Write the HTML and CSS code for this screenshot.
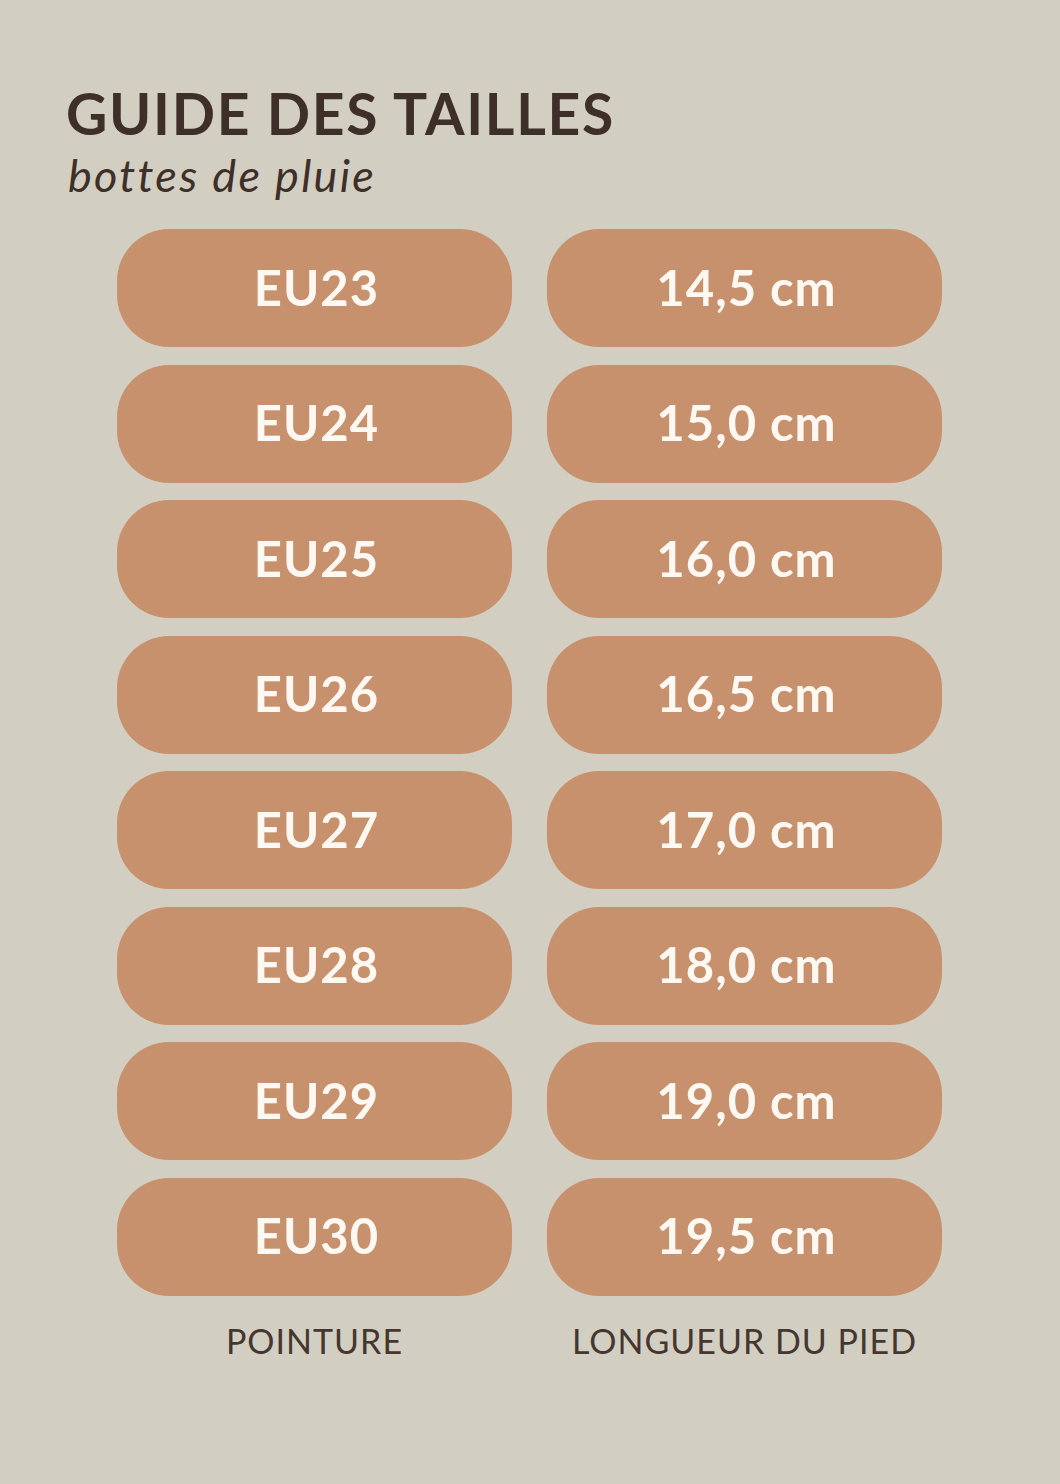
FILE: index.html
```html
<!DOCTYPE html>
<html lang="fr">
<head>
<meta charset="utf-8">
<title>Guide des tailles</title>
<link rel="stylesheet" href="styles.css">
</head>
<body>
<main class="page">
  <header class="head">
    <h1 class="title">GUIDE DES TAILLES</h1>
    <p class="subtitle">bottes de pluie</p>
  </header>
  <section class="grid">
    <div class="pill">EU23</div><div class="pill">14,5 cm</div>
    <div class="pill">EU24</div><div class="pill">15,0 cm</div>
    <div class="pill">EU25</div><div class="pill">16,0 cm</div>
    <div class="pill">EU26</div><div class="pill">16,5 cm</div>
    <div class="pill">EU27</div><div class="pill">17,0 cm</div>
    <div class="pill">EU28</div><div class="pill">18,0 cm</div>
    <div class="pill">EU29</div><div class="pill">19,0 cm</div>
    <div class="pill">EU30</div><div class="pill">19,5 cm</div>
    <div class="label">POINTURE</div><div class="label">LONGUEUR DU PIED</div>
  </section>
</main>
</body>
</html>
```
FILE: styles.css
```css
html, body {
  margin: 0;
  padding: 0;
  background: #d2cfc2;
}
.page {
  width: 1060px;
  height: 1484px;
  box-sizing: border-box;
  padding: 81px 0 0 0;
  font-family: Lato, "Open Sans", sans-serif;
}
.head {
  padding-left: 66px;
}
.title {
  margin: 0;
  font-size: 57px;
  font-weight: 700;
  line-height: 64px;
  color: #3e2f29;
  letter-spacing: 1.7px;
}
.subtitle {
  margin: 3px 0 0 0;
  font-size: 45px;
  font-style: italic;
  font-weight: 400;
  line-height: 54px;
  color: #3e2f29;
  padding-left: 2px;
  letter-spacing: 2.3px;
}
.grid {
  margin: 27px 0 0 117px;
  display: grid;
  grid-template-columns: 395px 395px;
  column-gap: 35px;
  row-gap: 17.5px;
}
.pill {
  height: 118px;
  border-radius: 52px;
  background: #c8916e;
  color: #fdf8f2;
  font-size: 49px;
  font-weight: 700;
  letter-spacing: 1px;
  display: flex;
  align-items: center;
  justify-content: center;
  padding: 0 0 3px 4px;
  box-sizing: border-box;
}
.label {
  text-align: center;
  font-size: 34px;
  font-weight: 400;
  letter-spacing: 1px;
  color: #45362f;
  margin-top: 7px;
}
```
